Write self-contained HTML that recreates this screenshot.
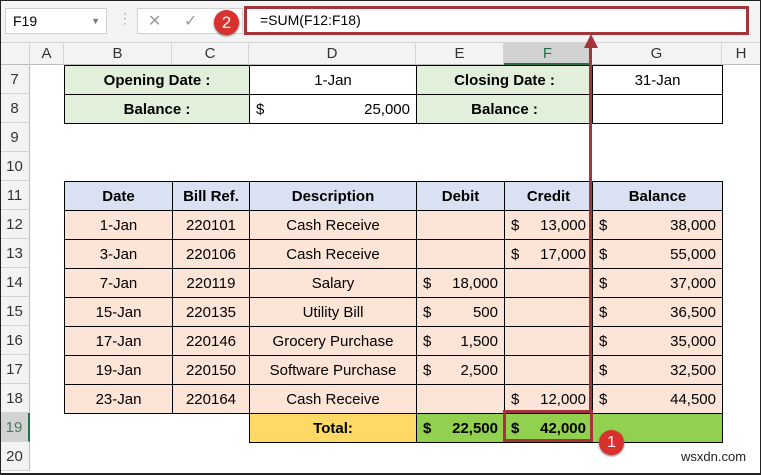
<!DOCTYPE html>
<html><head><style>
*{margin:0;padding:0;box-sizing:border-box}
body{width:761px;height:475px;overflow:hidden;background:#fff;font-family:"Liberation Sans",sans-serif;position:relative;color:#000}
.a{position:absolute}
table{border-collapse:collapse;position:absolute;table-layout:fixed;font-size:15px}
td{height:29px;padding:0 6px;text-align:center;white-space:nowrap}
.bd td{border:1px solid #000}
.g{background:#e2efda;font-weight:bold}
.p{background:#fce4d6}
.h{background:#d9e1f2;font-weight:bold}
.d{display:flex;justify-content:space-between}
.rh{position:absolute;left:0;width:30px;height:29px;border-bottom:1px solid #d4d4d4;border-right:1px solid #bdbdbd;background:#f3f3f3;font-size:15px;text-align:center;line-height:30px;color:#333}
.ch{position:absolute;top:43px;height:22px;border-right:1px solid #d4d4d4;border-bottom:1px solid #bdbdbd;background:#f3f3f3;font-size:15px;text-align:center;line-height:22px;color:#333}
</style></head><body>
<div class="a" style="left:0;top:0;width:761px;height:43px;background:#f3f3f3;border-bottom:1px solid #d4d4d4"></div>
<div class="a" style="left:5px;top:8px;width:102px;height:26px;background:#fff;border:1px solid #d0d0d0;font-size:14px;line-height:24px;padding-left:7px">F19<span style="position:absolute;right:6px;top:0;font-size:9px;color:#777">▼</span></div>
<div class="a" style="left:118px;top:10px;color:#aaa;font-size:14px">⋮</div>
<div class="a" style="left:137px;top:8px;width:106px;height:26px;background:#fff;border:1px solid #d0d0d0"></div>
<div class="a" style="left:148px;top:11px;color:#999;font-size:16px">✕</div>
<div class="a" style="left:184px;top:11px;color:#999;font-size:16px">✓</div>
<div class="a" style="left:244px;top:6px;width:505px;height:29px;background:#fff;border:3px solid #a5343a;font-size:14px;line-height:23px;padding-left:13px">=SUM(F12:F18)</div>
<div class="a" style="left:214px;top:10px;width:25px;height:25px;border-radius:50%;background:#d9322e;color:#fff;font-size:17px;text-align:center;line-height:25px;box-shadow:0 1px 2px #666">2</div>

<div class="ch" style="left:0;width:30px"></div>
<div class="ch" style="left:30px;width:34px">A</div>
<div class="ch" style="left:64px;width:108px">B</div>
<div class="ch" style="left:172px;width:77px">C</div>
<div class="ch" style="left:249px;width:167px">D</div>
<div class="ch" style="left:416px;width:88px">E</div>
<div class="ch" style="left:504px;width:88px;background:#d2d2d2;border-bottom:2px solid #217346;color:#217346">F</div>
<div class="ch" style="left:592px;width:130px">G</div>
<div class="ch" style="left:722px;width:39px">H</div>

<div class="rh" style="top:65px">7</div><div class="rh" style="top:94px">8</div><div class="rh" style="top:123px">9</div><div class="rh" style="top:152px">10</div><div class="rh" style="top:181px">11</div><div class="rh" style="top:210px">12</div><div class="rh" style="top:239px">13</div><div class="rh" style="top:268px">14</div><div class="rh" style="top:297px">15</div><div class="rh" style="top:326px">16</div><div class="rh" style="top:355px">17</div><div class="rh" style="top:384px">18</div><div class="rh" style="top:413px;background:#d2d2d2;color:#4a7a5c;border-right:2px solid #217346">19</div><div class="rh" style="top:442px">20</div>

<table class="bd" style="left:64px;top:65px;width:658px">
<colgroup><col style="width:185px"><col style="width:167px"><col style="width:176px"><col style="width:130px"></colgroup>
<tr><td class="g">Opening Date :</td><td>1-Jan</td><td class="g">Closing Date :</td><td>31-Jan</td></tr>
<tr><td class="g">Balance :</td><td><div class="d"><span>$</span><span>25,000</span></div></td><td class="g">Balance :</td><td></td></tr>
</table>

<table class="bd" style="left:64px;top:181px;width:658px">
<colgroup><col style="width:108px"><col style="width:77px"><col style="width:167px"><col style="width:88px"><col style="width:88px"><col style="width:130px"></colgroup>
<tr class="h"><td>Date</td><td>Bill Ref.</td><td>Description</td><td>Debit</td><td>Credit</td><td>Balance</td></tr>
<tr class="p"><td>1-Jan</td><td>220101</td><td>Cash Receive</td><td></td><td><div class="d"><span>$</span><span>13,000</span></div></td><td><div class="d"><span>$</span><span>38,000</span></div></td></tr>
<tr class="p"><td>3-Jan</td><td>220106</td><td>Cash Receive</td><td></td><td><div class="d"><span>$</span><span>17,000</span></div></td><td><div class="d"><span>$</span><span>55,000</span></div></td></tr>
<tr class="p"><td>7-Jan</td><td>220119</td><td>Salary</td><td><div class="d"><span>$</span><span>18,000</span></div></td><td></td><td><div class="d"><span>$</span><span>37,000</span></div></td></tr>
<tr class="p"><td>15-Jan</td><td>220135</td><td>Utility Bill</td><td><div class="d"><span>$</span><span>500</span></div></td><td></td><td><div class="d"><span>$</span><span>36,500</span></div></td></tr>
<tr class="p"><td>17-Jan</td><td>220146</td><td>Grocery Purchase</td><td><div class="d"><span>$</span><span>1,500</span></div></td><td></td><td><div class="d"><span>$</span><span>35,000</span></div></td></tr>
<tr class="p"><td>19-Jan</td><td>220150</td><td>Software Purchase</td><td><div class="d"><span>$</span><span>2,500</span></div></td><td></td><td><div class="d"><span>$</span><span>32,500</span></div></td></tr>
<tr class="p"><td>23-Jan</td><td>220164</td><td>Cash Receive</td><td></td><td><div class="d"><span>$</span><span>12,000</span></div></td><td><div class="d"><span>$</span><span>44,500</span></div></td></tr>
<tr style="font-weight:bold"><td style="border:none"></td><td style="border:none;border-right:1px solid #000"></td><td style="background:#ffd966">Total:</td><td style="background:#92d050"><div class="d"><span>$</span><span>22,500</span></div></td><td style="background:#92d050"><div class="d"><span>$</span><span>42,000</span></div></td><td style="background:#92d050"></td></tr>
</table>

<div class="a" style="left:503px;top:410px;width:90px;height:32px;border:3px solid #a5343a"></div>
<div class="a" style="left:589px;top:44px;width:3px;height:367px;background:#a5343a"></div>
<div class="a" style="left:584px;top:34px;width:0;height:0;border-left:7px solid transparent;border-right:7px solid transparent;border-bottom:14px solid #a5343a"></div>
<div class="a" style="left:599px;top:430px;width:25px;height:25px;border-radius:50%;background:#d9322e;color:#fff;font-size:16px;text-align:center;line-height:25px;box-shadow:0 1px 2px #666">1</div>
<div class="a" style="left:681px;top:449px;font-size:13px;color:#222">wsxdn.com</div>
<div class="a" style="left:0;top:0;width:761px;height:475px;border:1px solid #222;border-bottom-width:2px"></div>
</body></html>
